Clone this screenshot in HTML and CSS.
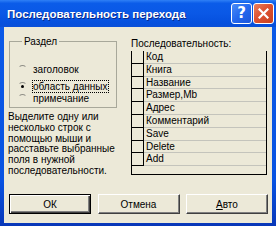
FILE: index.html
```html
<!DOCTYPE html>
<html lang="ru">
<head>
<meta charset="utf-8">
<title>Последовательность перехода</title>
<link rel="stylesheet" href="styles.css">
</head>
<body>
<div class="window">
  <div class="titlebar">
    <span class="title">Последовательность перехода</span>
    <div class="tb-buttons">
      <span class="tb-btn help">?</span>
      <span class="tb-btn close"><svg width="11" height="11" viewBox="0 0 11 11"><path d="M1.5 1.5 L9.5 9.5 M9.5 1.5 L1.5 9.5" stroke="#fff" stroke-width="2.2" stroke-linecap="square"/></svg></span>
    </div>
  </div>
  <div class="client">
    <div class="main">
      <div class="left">
        <fieldset class="group">
          <legend>Раздел</legend>
          <div class="opt o1"><span class="radio"></span><span class="lbl">заголовок</span></div>
          <div class="opt o2"><span class="radio on"></span><span class="lbl focus">область данных</span></div>
          <div class="opt o3"><span class="radio"></span><span class="lbl">примечание</span></div>
        </fieldset>
        <p class="hint">Выделите одну или несколько строк с помощью мыши и расставьте выбранные поля в нужной последовательности.</p>
      </div>
      <div class="right">
        <div class="list-label">Последовательность:</div>
        <div class="list">
          <div class="row"><span class="sel"></span><span class="name">Код</span></div>
          <div class="row"><span class="sel"></span><span class="name">Книга</span></div>
          <div class="row"><span class="sel"></span><span class="name">Название</span></div>
          <div class="row"><span class="sel"></span><span class="name">Размер,Mb</span></div>
          <div class="row"><span class="sel"></span><span class="name">Адрес</span></div>
          <div class="row"><span class="sel"></span><span class="name">Комментарий</span></div>
          <div class="row"><span class="sel"></span><span class="name">Save</span></div>
          <div class="row"><span class="sel"></span><span class="name">Delete</span></div>
          <div class="row"><span class="sel"></span><span class="name">Add</span></div>
        </div>
      </div>
    </div>
    <div class="buttons">
      <button class="btn default">ОК</button>
      <button class="btn">Отмена</button>
      <button class="btn"><u>А</u>вто</button>
    </div>
  </div>
</div>
</body>
</html>
```
FILE: styles.css
```css
html, body {
  margin: 0;
  padding: 0;
}
body {
  font-family: "Liberation Sans", Arial, sans-serif;
  font-size: 10px;
  color: #000;
  background: #ECE9D8;
}
.window {
  width: 276px;
  height: 226px;
  display: flex;
  flex-direction: column;
  background: linear-gradient(to bottom, #0B5AE8 0%, #0752E2 80%, #0837B8 100%);
  overflow: hidden;
}
.titlebar {
  height: 27px;
  flex: none;
  display: flex;
  align-items: center;
  padding-left: 7px;
  background: linear-gradient(to bottom, #2F80F6 0%, #0B5CE9 12%, #0A58E6 50%, #0550DE 85%, #0A4FD8 100%);
}
.title {
  color: #fff;
  font-weight: bold;
  font-size: 11.5px;
  text-shadow: 1px 1px 0 #0A2A8A;
  flex: 1;
  white-space: nowrap;
}
.tb-buttons {
  display: flex;
  gap: 1px;
  margin-right: 2px;
  margin-top: -1px;
}
.tb-btn {
  width: 21px;
  height: 21px;
  box-sizing: border-box;
  border: 1px solid #fff;
  border-radius: 3px;
  display: flex;
  align-items: center;
  justify-content: center;
  color: #fff;
}
.help {
  background: linear-gradient(135deg, #4A8CF8 0%, #2468EE 50%, #1C56DA 100%);
  font-weight: bold;
  font-size: 15px;
  font-family: "DejaVu Sans", sans-serif;
}
.close {
  background: linear-gradient(135deg, #E8805E 0%, #DE5232 45%, #C8401E 100%);
}
.client {
  flex: 1;
  margin: 0 4px 3px 4px;
  background: #ECE9D8;
  display: flex;
  flex-direction: column;
}
.main {
  display: grid;
  grid-template-columns: 110px 136px;
  column-gap: 13px;
  padding: 0 5px 0 4px;
}
.group {
  margin: 8px 0 0 1px;
  padding: 0 0 3px 8px;
  width: 108px;
  box-sizing: border-box;
  border: 1px solid #A8A89A;
  min-width: 0;
}
.group legend {
  padding: 0 2px;
  margin-left: 4px;
  line-height: 13px;
}
.opt {
  display: flex;
  align-items: center;
  line-height: 13px;
  height: 13px;
}
.o1 { margin-top: 15px; }
.o2 { margin-top: 4px; }
.o3 { margin-top: 0; height: 11px; line-height: 11px; }
.radio {
  width: 9px;
  height: 9px;
  box-sizing: border-box;
  border-radius: 50%;
  border: 1px solid transparent;
  border-top-color: #8E8E86;
  margin-right: 6px;
  display: flex;
  align-items: center;
  justify-content: center;
}
.radio.on::after {
  content: "";
  width: 3px;
  height: 3px;
  background: #000;
  border-radius: 50%;
}
.lbl {
  white-space: nowrap;
}
.focus {
  border: 1px dotted #000;
  line-height: 11px;
  padding: 0 1px 0 0;
  margin-left: -1px;
}
.hint {
  margin: 4px 0 0 0;
  line-height: 10.8px;
  width: 110px;
}
.list-label {
  margin-top: 10px;
  line-height: 13px;
  height: 13px;
}
.list {
  margin-top: 1px;
  height: 124px;
  box-sizing: border-box;
  border-left: 1px solid #000;
  border-right: 1px solid #000;
  border-bottom: 1px solid #000;
}
.row {
  display: flex;
  height: 12.8px;
}
.sel {
  width: 12px;
  flex: none;
  box-sizing: border-box;
  border-right: 1px solid #000;
  border-bottom: 1px solid #000;
}
.name {
  flex: 1;
  box-sizing: border-box;
  border-bottom: 1px solid #C4C4BC;
  padding-left: 2px;
  line-height: 12px;
  white-space: nowrap;
}
.buttons {
  margin-top: auto;
  margin-bottom: 9px;
  display: flex;
  justify-content: space-between;
  padding: 0 4px 0 5px;
}
.btn {
  width: 82px;
  height: 20px;
  box-sizing: border-box;
  font-family: "Liberation Sans", Arial, sans-serif;
  font-size: 10px;
  color: #000;
  background: #ECE9D8;
  border: 1px solid;
  border-color: #FFFFFF #404040 #404040 #FFFFFF;
  box-shadow: inset -1px -1px 0 #808080;
  padding: 0;
  margin: 0;
}
.btn.default {
  border-color: #000;
  box-shadow: inset 1px 1px 0 #FFFFFF, inset -1px -1px 0 #404040, inset -2px -2px 0 #808080;
}
.btn u {
  text-decoration: underline;
}
```
